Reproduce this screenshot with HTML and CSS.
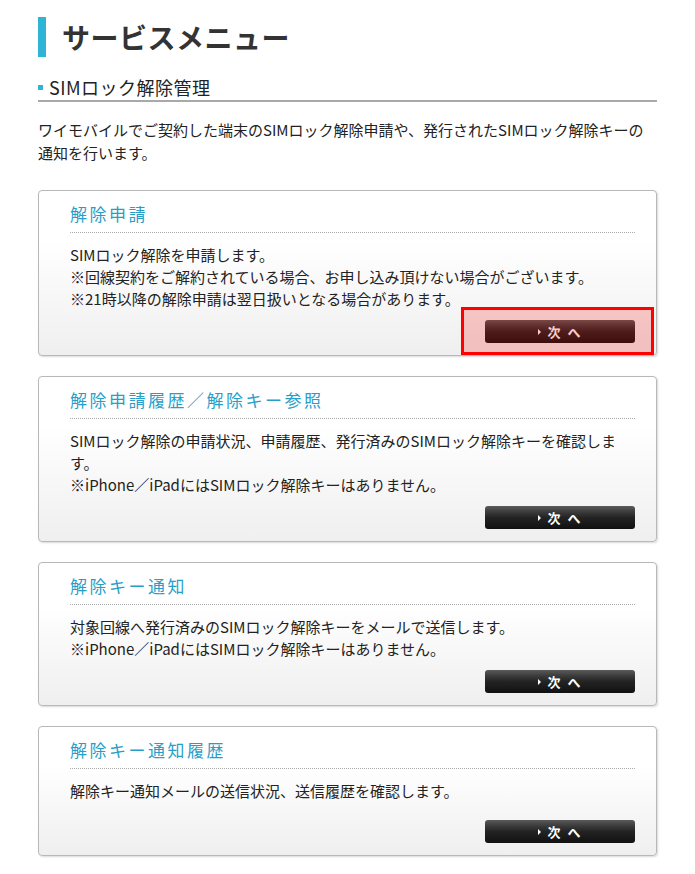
FILE: index.html
```html
<!DOCTYPE html>
<html lang="ja">
<head>
  <meta charset="UTF-8" />
  <meta name="viewport" content="width=device-width, initial-scale=1.0" />
  <title>サービスメニュー</title>
  <link rel="stylesheet" href="styles.css">
</head>
<body>
  <div class="page">
    <h1 class="page-title">サービスメニュー</h1>
    <h2 class="section-title">SIMロック解除管理</h2>
    <p class="lead">ワイモバイルでご契約した端末のSIMロック解除申請や、発行されたSIMロック解除キーの通知を行います。</p>

    <div class="card">
      <h3 class="card-title">解除申請</h3>
      <p class="card-text">SIMロック解除を申請します。<br>※回線契約をご解約されている場合、お申し込み頂けない場合がございます。<br>※21時以降の解除申請は翌日扱いとなる場合があります。</p>
      <div class="card-foot">
        <span class="btn-wrap marked"><a class="btn-next" href="#"><span class="arrow"></span>次 へ</a></span>
      </div>
    </div>

    <div class="card">
      <h3 class="card-title">解除申請履歴／解除キー参照</h3>
      <p class="card-text">SIMロック解除の申請状況、申請履歴、発行済みのSIMロック解除キーを確認します。<br>※iPhone／iPadにはSIMロック解除キーはありません。</p>
      <div class="card-foot">
        <span class="btn-wrap"><a class="btn-next" href="#"><span class="arrow"></span>次 へ</a></span>
      </div>
    </div>

    <div class="card">
      <h3 class="card-title">解除キー通知</h3>
      <p class="card-text">対象回線へ発行済みのSIMロック解除キーをメールで送信します。<br>※iPhone／iPadにはSIMロック解除キーはありません。</p>
      <div class="card-foot">
        <span class="btn-wrap"><a class="btn-next" href="#"><span class="arrow"></span>次 へ</a></span>
      </div>
    </div>

    <div class="card">
      <h3 class="card-title">解除キー通知履歴</h3>
      <p class="card-text">解除キー通知メールの送信状況、送信履歴を確認します。</p>
      <div class="card-foot">
        <span class="btn-wrap"><a class="btn-next" href="#"><span class="arrow"></span>次 へ</a></span>
      </div>
    </div>
  </div>
</body>
</html>
```

FILE: styles.css
```css
body {
  margin: 0;
  background: #fff;
  color: #222;
  font-family: "Noto Sans CJK JP", "Noto Sans", sans-serif;
}
.page {
  width: 619px;
  padding: 17px 0 20px 38px;
}
.page-title {
  margin: 0;
  height: 40px;
  line-height: 40px;
  border-left: 8px solid #2fb3d6;
  padding-left: 16px;
  font-size: 28px;
  font-weight: 700;
  letter-spacing: 0.5px;
  color: #333;
}
.section-title {
  display: flex;
  align-items: center;
  gap: 6px;
  margin: 18px 0 0;
  line-height: 24px;
  padding-bottom: 1px;
  border-bottom: 2px solid #a9a9a9;
  font-size: 18px;
  font-weight: 400;
  letter-spacing: 0.5px;
  color: #222;
}
.section-title::before {
  content: "";
  width: 5px;
  height: 5px;
  background: #2fb3d6;
}
.lead {
  margin: 16px 0 26px;
  font-size: 15px;
  line-height: 23px;
}
.card {
  position: relative;
  border: 1px solid #b8b8b8;
  border-radius: 4px;
  box-shadow: 1px 1px 2px rgba(0,0,0,0.15);
  background: linear-gradient(#fff 0%, #fff 30%, #efefef 100%);
  padding: 11px 21px 12px 31px;
  margin-bottom: 20px;
}
.card-title {
  margin: 0;
  line-height: 24px;
  padding-bottom: 6px;
  border-bottom: 1px dotted #aaa;
  font-size: 17px;
  font-weight: 400;
  letter-spacing: 2.5px;
  color: #279ec8;
}
.card-text {
  margin: 11px 0 0;
  min-height: 30px;
  font-size: 15px;
  line-height: 22px;
  padding-right: 12px;
}
.card-foot {
  display: flex;
  justify-content: flex-end;
  margin-top: 10px;
}
.btn-wrap {
  position: relative;
  display: block;
}
.btn-next {
  display: flex;
  align-items: center;
  justify-content: center;
  width: 150px;
  height: 23px;
  border-radius: 3px;
  background: linear-gradient(#5a5a5a 0%, #3c3c3c 25%, #232323 50%, #111 100%);
  color: #fff;
  font-size: 13px;
  font-weight: 700;
  letter-spacing: 2px;
  text-decoration: none;
  box-sizing: border-box;
}
.arrow {
  width: 0;
  height: 0;
  border-left: 3px solid #fff;
  border-top: 3px solid transparent;
  border-bottom: 3px solid transparent;
  margin-right: 7px;
}
.btn-wrap.marked::after {
  content: "";
  position: absolute;
  top: -13px;
  right: -19px;
  bottom: -12px;
  left: -24px;
  border: 3px solid #f00;
  background: rgba(255, 0, 0, 0.2);
}
```
